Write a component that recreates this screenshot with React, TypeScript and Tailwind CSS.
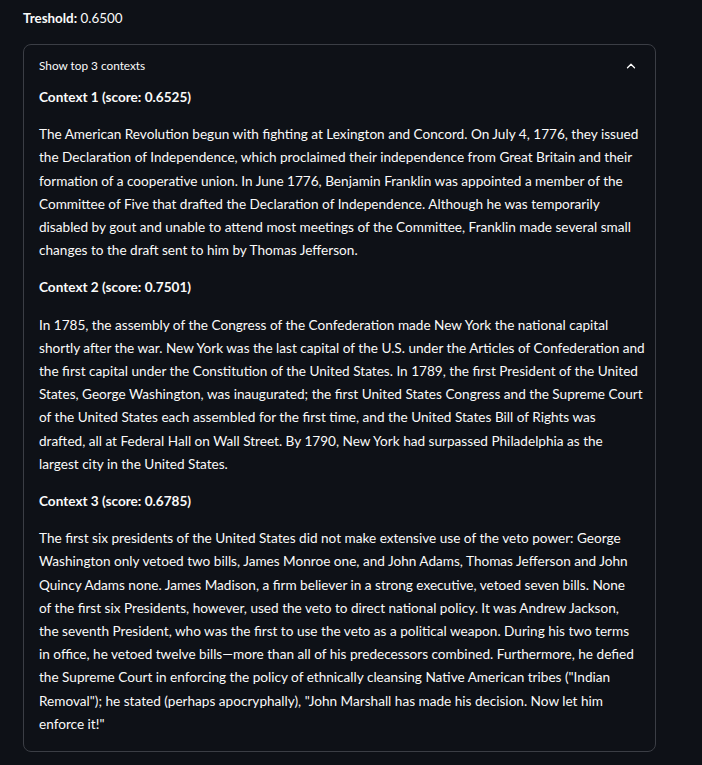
import { ChevronUp } from "lucide-react";

const contexts = [
  {
    title: "Context 1 (score: 0.6525)",
    lines: [
      "The American Revolution begun with fighting at Lexington and Concord. On July 4, 1776, they issued",
      "the Declaration of Independence, which proclaimed their independence from Great Britain and their",
      "formation of a cooperative union. In June 1776, Benjamin Franklin was appointed a member of the",
      "Committee of Five that drafted the Declaration of Independence. Although he was temporarily",
      "disabled by gout and unable to attend most meetings of the Committee, Franklin made several small",
      "changes to the draft sent to him by Thomas Jefferson.",
    ],
  },
  {
    title: "Context 2 (score: 0.7501)",
    lines: [
      "In 1785, the assembly of the Congress of the Confederation made New York the national capital",
      "shortly after the war. New York was the last capital of the U.S. under the Articles of Confederation and",
      "the first capital under the Constitution of the United States. In 1789, the first President of the United",
      "States, George Washington, was inaugurated; the first United States Congress and the Supreme Court",
      "of the United States each assembled for the first time, and the United States Bill of Rights was",
      "drafted, all at Federal Hall on Wall Street. By 1790, New York had surpassed Philadelphia as the",
      "largest city in the United States.",
    ],
  },
  {
    title: "Context 3 (score: 0.6785)",
    lines: [
      "The first six presidents of the United States did not make extensive use of the veto power: George",
      "Washington only vetoed two bills, James Monroe one, and John Adams, Thomas Jefferson and John",
      "Quincy Adams none. James Madison, a firm believer in a strong executive, vetoed seven bills. None",
      "of the first six Presidents, however, used the veto to direct national policy. It was Andrew Jackson,",
      "the seventh President, who was the first to use the veto as a political weapon. During his two terms",
      "in office, he vetoed twelve bills\u2014more than all of his predecessors combined. Furthermore, he defied",
      "the Supreme Court in enforcing the policy of ethnically cleansing Native American tribes (\"Indian",
      "Removal\"); he stated (perhaps apocryphally), \"John Marshall has made his decision. Now let him",
      "enforce it!\"",
    ],
  },
];

export default function App() {
  return (
    <div className="min-h-screen bg-[#0e1117] pl-[23px] pr-[46px] pt-[7px] pb-4 text-[#fafafa] font-['Lato',sans-serif]">
      <p className="text-[13.4px] leading-[23px]">
        <span className="font-bold">Treshold:</span> 0.6500
      </p>
      <div className="mt-[14px] rounded-lg border border-[#3b3e45]">
        <div className="flex items-center justify-between pl-[15px] pr-[17px] h-[41px] pt-px">
          <span className="text-[11.8px]">Show top 3 contexts</span>
          <ChevronUp className="w-3.5 h-3.5 text-white" strokeWidth={2.2} />
        </div>
        <div className="flex flex-col gap-[14px] px-[15px] pb-[15px]">
          {contexts.map((c) => (
            <div key={c.title} className="flex flex-col gap-[14px]">
              <p className="text-[13.6px] leading-[23.2px] font-bold">{c.title}</p>
              <p className="text-[13.6px] leading-[23.2px] whitespace-nowrap">
                {c.lines.map((l, i) => (
                  <span key={i}>
                    {l}
                    {i < c.lines.length - 1 && <br />}
                  </span>
                ))}
              </p>
            </div>
          ))}
        </div>
      </div>
    </div>
  );
}
